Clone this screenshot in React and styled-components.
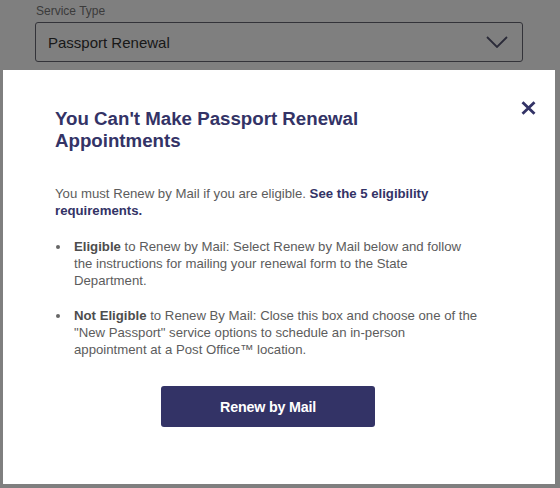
import React from "react";
import styled, { createGlobalStyle } from "styled-components";

const GlobalStyle = createGlobalStyle`
  html, body {
    margin: 0;
    padding: 0;
    background: #ffffff;
    font-family: "Liberation Sans", Arial, Helvetica, sans-serif;
  }
  * { box-sizing: border-box; }
`;

const Page = styled.div`
  position: relative;
  width: 560px;
  height: 488px;
  overflow: hidden;
  background: #ffffff;
  padding: 4px 37px 0 35px;
`;

const Field = styled.div`
  display: flex;
  flex-direction: column;
  gap: 4px;
`;

const Label = styled.label`
  font-size: 12px;
  line-height: 14px;
  color: #777777;
  padding-left: 1px;
`;

const Select = styled.div`
  height: 40px;
  border: 1px solid #666672;
  border-radius: 3px;
  display: flex;
  align-items: center;
  justify-content: space-between;
  padding: 0 14px 0 12px;
  font-size: 15px;
  color: #333333;
  background: #ffffff;
`;

const Overlay = styled.div`
  position: absolute;
  inset: 0;
  background: rgba(0, 0, 0, 0.5);
  display: flex;
  align-items: flex-start;
  padding: 70px 5px 0 3px;
`;

const Modal = styled.div`
  position: relative;
  flex: 1;
  background: #ffffff;
  display: flex;
  flex-direction: column;
  padding: 38px 74px 57px 52px;
`;

const CloseButton = styled.button`
  position: absolute;
  top: 30px;
  right: 19px;
  width: 16px;
  height: 15px;
  padding: 0;
  border: none;
  background: transparent;
  display: flex;
  align-items: center;
  justify-content: center;
  cursor: pointer;
`;

const Title = styled.h2`
  margin: 0;
  font-size: 18.7px;
  line-height: 21.5px;
  font-weight: 700;
  color: #333366;
`;

const Text = styled.p`
  margin: 34px 0 0;
  font-size: 13.2px;
  line-height: 17px;
  color: #5c5c5c;
`;

const Link = styled.a`
  font-weight: 700;
  color: #333366;
  text-decoration: none;
`;

const List = styled.ul`
  list-style: none;
  margin: 19px 0 0;
  padding: 0;
  display: flex;
  flex-direction: column;
  gap: 18px;
`;

const Item = styled.li`
  display: flex;
  align-items: flex-start;
  font-size: 13.2px;
  line-height: 17px;
  color: #5c5c5c;
`;

const Dot = styled.span`
  flex: none;
  width: 4px;
  height: 4px;
  border-radius: 50%;
  background: #666666;
  margin: 7px 14px 0 1px;
`;

const Strong = styled.strong`
  font-weight: 700;
  color: #4d4d4d;
`;

const PrimaryButton = styled.button`
  align-self: center;
  margin-top: 28px;
  width: 214px;
  height: 41px;
  border: none;
  border-radius: 3px;
  background: #333366;
  color: #ffffff;
  font-family: "Liberation Sans", Arial, Helvetica, sans-serif;
  font-size: 14.3px;
  font-weight: 700;
  letter-spacing: -0.2px;
  cursor: pointer;
`;

export default function App() {
  return (
    <>
      <GlobalStyle />
      <Page>
        <Field>
          <Label>Service Type</Label>
          <Select>
            <span>Passport Renewal</span>
            <svg width="22" height="12" viewBox="0 0 22 12" fill="none">
              <path d="M1 1 L11 11 L21 1" stroke="#555570" strokeWidth="1.8" />
            </svg>
          </Select>
        </Field>
        <Overlay>
          <Modal>
            <CloseButton aria-label="Close">
              <svg width="15" height="14" viewBox="0 0 15 14" fill="none">
                <path d="M1.5 1.2 L13.5 12.8 M13.5 1.2 L1.5 12.8" stroke="#333366" strokeWidth="2.8" />
              </svg>
            </CloseButton>
            <Title>You Can't Make Passport Renewal Appointments</Title>
            <Text>
              You must Renew by Mail if you are eligible.{" "}
              <Link href="#">See the 5 eligibility requirements.</Link>
            </Text>
            <List>
              <Item>
                <Dot />
                <span>
                  <Strong>Eligible</Strong> to Renew by Mail: Select Renew by Mail below and follow the
                  instructions for mailing your renewal form to the State Department.
                </span>
              </Item>
              <Item>
                <Dot />
                <span>
                  <Strong>Not Eligible</Strong> to Renew By Mail: Close this box and choose one of the
                  "New Passport" service options to schedule an in-person appointment at a Post
                  Office™ location.
                </span>
              </Item>
            </List>
            <PrimaryButton>Renew by Mail</PrimaryButton>
          </Modal>
        </Overlay>
      </Page>
    </>
  );
}
